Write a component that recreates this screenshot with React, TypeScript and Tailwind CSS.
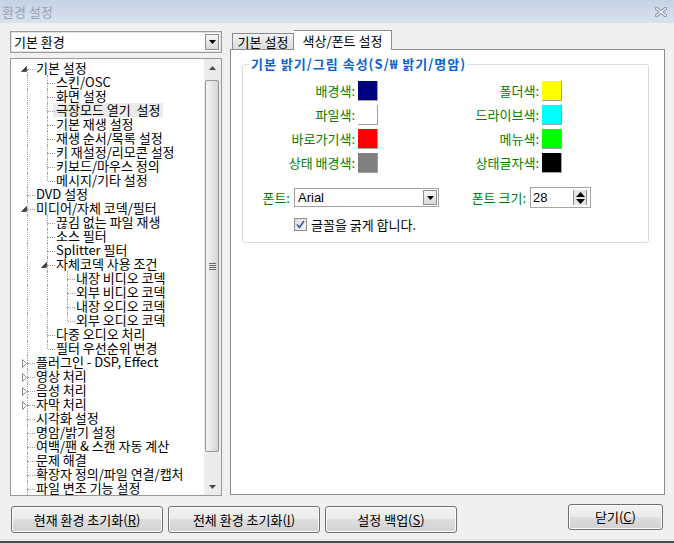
import React from 'react';

type TreeNode = { label: string; children?: TreeNode[]; selected?: boolean; collapsed?: boolean };

const tree: TreeNode[] = [
  {
    label: '기본 설정',
    children: [
      { label: '스킨/OSC' },
      { label: '화면 설정' },
      { label: '극장모드 열기  설정', selected: true },
      { label: '기본 재생 설정' },
      { label: '재생 순서/목록 설정' },
      { label: '키 재설정/리모콘 설정' },
      { label: '키보드/마우스 정의' },
      { label: '메시지/기타 설정' },
    ],
  },
  { label: 'DVD 설정' },
  {
    label: '미디어/자체 코덱/필터',
    children: [
      { label: '끊김 없는 파일 재생' },
      { label: '소스 필터' },
      { label: 'Splitter 필터' },
      {
        label: '자체코덱 사용 조건',
        children: [
          { label: '내장 비디오 코덱' },
          { label: '외부 비디오 코덱' },
          { label: '내장 오디오 코덱' },
          { label: '외부 오디오 코덱' },
        ],
      },
      { label: '다중 오디오 처리' },
      { label: '필터 우선순위 변경' },
    ],
  },
  { label: '플러그인 - DSP, Effect', collapsed: true },
  { label: '영상 처리', collapsed: true },
  { label: '음성 처리', collapsed: true },
  { label: '자막 처리', collapsed: true },
  { label: '시각화 설정' },
  { label: '명암/밝기 설정' },
  { label: '여백/팬 & 스캔 자동 계산' },
  { label: '문제 해결' },
  { label: '확장자 정의/파일 연결/캡처' },
  { label: '파일 변조 기능 설정' },
];

type Row = { node: TreeNode; guides: boolean[]; up: boolean; down: boolean };

function flatten(nodes: TreeNode[], guides: boolean[], level: number): Row[] {
  const rows: Row[] = [];
  nodes.forEach((node, i) => {
    // the root list goes on below the visible area, so roots always continue
    const down = level === 0 ? true : i < nodes.length - 1;
    const up = !(level === 0 && i === 0);
    rows.push({ node, guides, up, down });
    if (node.children) rows.push(...flatten(node.children, [...guides, down], level + 1));
  });
  return rows;
}

const dot = 'border-l border-dotted border-[#a0a0a0]';

function TreeRow({ row }: { row: Row }) {
  const { node, guides, up, down } = row;
  return (
    <div className="flex h-[14px] items-stretch">
      {guides.map((g, i) => (
        <div key={i} className="flex w-[20px] shrink-0">
          <div className="w-[11px]" />
          {g && <div className={`w-px ${dot}`} />}
        </div>
      ))}
      <div className="relative flex w-[20px] shrink-0">
        <div className="w-[11px]" />
        <div className="flex w-px flex-col">
          <div className={`h-[8px] ${up ? dot : ''}`} />
          <div className={`flex-1 ${down ? dot : ''}`} />
        </div>
        <div className="h-[9px] w-[7px] border-b border-dotted border-[#a0a0a0]" />
        {node.children && (
          <svg className="absolute left-[5px] top-[5px]" width="6" height="6" viewBox="0 0 6 6">
            <polygon points="5.5,0.5 5.5,5.5 0.5,5.5" fill="#3f3f3f" stroke="#595959" strokeWidth="1" />
          </svg>
        )}
        {node.collapsed && (
          <svg className="absolute left-[6px] top-[4px] bg-white" width="5" height="9" viewBox="0 0 5 9">
            <polygon points="0.5,0.5 4.5,4.5 0.5,8.5" fill="#fff" stroke="#8c8c8c" strokeWidth="1" />
          </svg>
        )}
      </div>
      <span
        className={`whitespace-pre leading-[14px] text-black ${
          node.selected ? '-ml-[3px] bg-[#ebebeb] px-[3px]' : ''
        }`}
      >
        {node.label}
      </span>
    </div>
  );
}

function DownArrow() {
  return (
    <svg width="7" height="4" viewBox="0 0 7 4">
      <polygon points="0,0 7,0 3.5,4" fill="#000" />
    </svg>
  );
}

function Scrollbar() {
  return (
    <div className="flex w-[17px] shrink-0 flex-col bg-[#ececec]">
      <div className="flex h-[17px] items-center justify-center">
        <svg width="7" height="4" viewBox="0 0 7 4">
          <polygon points="0,4 7,4 3.5,0" fill="#4a4a4a" />
        </svg>
      </div>
      <div className="flex-1 pt-[4px]">
        <div className="ml-px flex h-[372px] w-[14px] items-center justify-center rounded-[2px] border border-[#969696] bg-[linear-gradient(90deg,#f4f4f4,#e6e6e6_50%,#d4d4d4)]">
          <div className="flex w-[7px] flex-col gap-[1px]">
            <div className="h-px bg-[#6f6f6f]" />
            <div className="h-px bg-[#6f6f6f]" />
            <div className="h-px bg-[#6f6f6f]" />
            <div className="h-px bg-[#6f6f6f]" />
          </div>
        </div>
      </div>
      <div className="flex h-[17px] items-center justify-center">
        <svg width="7" height="4" viewBox="0 0 7 4">
          <polygon points="0,0 7,0 3.5,4" fill="#4a4a4a" />
        </svg>
      </div>
    </div>
  );
}

function Swatch({ color, label }: { color: string; label: string }) {
  return (
    <div className="flex items-center">
      <span className="flex-1 text-right text-[#008000]">{label}</span>
      <div className="ml-[3px] h-[20px] w-[20px] border-b border-r border-[#a0a0a0]" style={{ backgroundColor: color }} />
    </div>
  );
}

function Btn({ children, className = '' }: { children: React.ReactNode; className?: string }) {
  return (
    <div
      className={`flex items-center justify-center rounded-[3px] border border-[#707070] bg-[linear-gradient(#f2f2f2,#ebebeb_50%,#dddddd_50%,#d2d2d2)] text-black shadow-[inset_0_0_0_1px_#fbfbfb] ${className}`}
    >
      {children}
    </div>
  );
}

export default function App() {
  const rows = flatten(tree, [], 0);
  return (
    <div className="flex h-[543px] w-[674px] flex-col overflow-hidden bg-[#f0f0f0] font-['Noto_Sans_CJK_KR',sans-serif] text-[13px] text-black">
      {/* title bar */}
      <div className="flex h-[23px] shrink-0 items-center justify-between bg-[linear-gradient(#c4d2e3,#d8e3ef)] pl-[2px] pr-[7px]">
        <span className="text-[13px] text-[#97a3b1]">환경 설정</span>
        <svg width="12" height="10" viewBox="0 0 12 10">
          <path d="M1.5 1.5 L10.5 8.5 M10.5 1.5 L1.5 8.5" stroke="#8593a3" strokeWidth="3.2" strokeLinecap="square" />
          <path d="M1.5 1.5 L10.5 8.5 M10.5 1.5 L1.5 8.5" stroke="#ffffff" strokeWidth="1.2" strokeLinecap="square" />
        </svg>
      </div>

      <div className="flex gap-[8px] pl-[10px] pr-[9px] pt-[8px]">
        {/* left column */}
        <div className="flex w-[212px] flex-col gap-[5px]">
          <div className="flex h-[22px] items-center border border-[#9c9c9c] bg-white pl-[3px] pr-[2px] shadow-[inset_0_0_0_1px_#e2e2e2]">
            <span className="flex-1 text-[13px]">기본 환경</span>
            <div className="flex h-[16px] w-[14px] items-center justify-center border border-[#8d8d8d] bg-[linear-gradient(#f6f6f6,#d9d9d9)]">
              <DownArrow />
            </div>
          </div>
          <div className="flex h-[438px] border border-[#9a9a9a] bg-white">
            <div className="flex-1 overflow-hidden pl-[5px] pt-[2px]">
              {rows.map((r, i) => (
                <TreeRow key={i} row={r} />
              ))}
            </div>
            <Scrollbar />
          </div>
        </div>

        {/* right column */}
        <div className="flex w-[435px] flex-col">
          <div className="flex h-[18px] items-end pl-[2px]">
            <div className="-mb-px flex h-[17px] w-[62px] items-center justify-center border border-b-0 border-[#898c95] bg-[linear-gradient(#f3f3f3,#dadada)]">
              기본 설정
            </div>
            <div className="relative z-10 -mb-px flex h-[20px] w-[98px] items-center justify-center border border-b-0 border-l-0 border-[#898c95] bg-white">
              색상/폰트 설정
            </div>
          </div>
          <div className="h-[446px] border border-[#898c95] bg-white pl-[11px] pr-[15px] pt-[6px]">
            <fieldset className="h-[187px] rounded-[3px] border border-[#d5dce3] bg-white">
              <legend className="ml-[6px] px-[2px] text-[13px] font-bold leading-[16px] tracking-[1px] text-[#0a63d2]">
                기본 밝기/그림 속성(S/₩ 밝기/명암)
              </legend>
              <div className="flex pt-[9px]">
                <div className="flex w-[135px] flex-col gap-[4px]">
                  <Swatch color="#000080" label="배경색:" />
                  <Swatch color="#ffffff" label="파일색:" />
                  <Swatch color="#ff0000" label="바로가기색:" />
                  <Swatch color="#808080" label="상태 배경색:" />
                </div>
                <div className="flex w-[184px] flex-col gap-[4px]">
                  <Swatch color="#ffff00" label="폴더색:" />
                  <Swatch color="#00ffff" label="드라이브색:" />
                  <Swatch color="#00ff00" label="메뉴색:" />
                  <Swatch color="#000000" label="상태글자색:" />
                </div>
              </div>
              <div className="mt-[14px] flex items-center">
                <span className="w-[47px] text-right text-[#008000]">폰트:</span>
                <div className="ml-[4px] flex h-[19px] w-[145px] items-center border border-[#a0a0a0] bg-white pl-[3px] pr-[1px]">
                  <span className="flex-1 font-['Liberation_Sans',sans-serif] text-[13px]">Arial</span>
                  <div className="flex h-[15px] w-[14px] items-center justify-center border border-[#8d8d8d] bg-[linear-gradient(#f6f6f6,#d9d9d9)]">
                    <DownArrow />
                  </div>
                </div>
                <span className="w-[87px] text-right text-[#008000]">폰트 크기:</span>
                <div className="ml-[4px] flex h-[21px] w-[61px] items-center border border-[#a5a5a5] bg-white pl-[2px] pr-[3px]">
                  <span className="flex-1 font-['Liberation_Sans',sans-serif] text-[13px]">28</span>
                  <div className="flex h-[15px] w-[14px] flex-col items-center justify-center gap-[2px] border-x border-[#8d8d8d] bg-[#e6e6e6]">
                    <svg width="9" height="5" viewBox="0 0 9 5">
                      <polygon points="0,5 9,5 4.5,0" fill="#000" />
                    </svg>
                    <svg width="9" height="5" viewBox="0 0 9 5">
                      <polygon points="0,0 9,0 4.5,5" fill="#000" />
                    </svg>
                  </div>
                </div>
              </div>
              <div className="ml-[51px] mt-[7px] flex items-center">
                <div className="flex h-[13px] w-[13px] items-center justify-center border border-[#8f8f8f] bg-[linear-gradient(135deg,#dcdcdc,#f6f6f6)]">
                  <svg width="9" height="9" viewBox="0 0 9 9">
                    <path d="M1 4.5 L3.5 7.5 L8 1" stroke="#3d55a5" strokeWidth="1.6" fill="none" />
                  </svg>
                </div>
                <span className="ml-[4px]">글꼴을 굵게 합니다.</span>
              </div>
            </fieldset>
          </div>
        </div>
      </div>

      {/* buttons */}
      <div className="mt-[10px] flex items-start gap-[5px] pl-[11px] pr-[11px]">
        <Btn className="h-[27px] w-[152px]">
          현재 환경 초기화(<u>R</u>)
        </Btn>
        <Btn className="h-[27px] w-[152px]">
          전체 환경 초기화(<u>I</u>)
        </Btn>
        <Btn className="h-[27px] w-[132px]">
          설정 백업(<u>S</u>)
        </Btn>
        <Btn className="-mt-[2px] ml-auto h-[26px] w-[95px]">
          닫기(<u>C</u>)
        </Btn>
      </div>

      <div className="mt-auto h-px bg-[#d4dfeb]" />
      <div className="h-px bg-[#f0f0f0]" />
      <div className="h-[2px] bg-[#4a4a4a]" />
    </div>
  );
}
